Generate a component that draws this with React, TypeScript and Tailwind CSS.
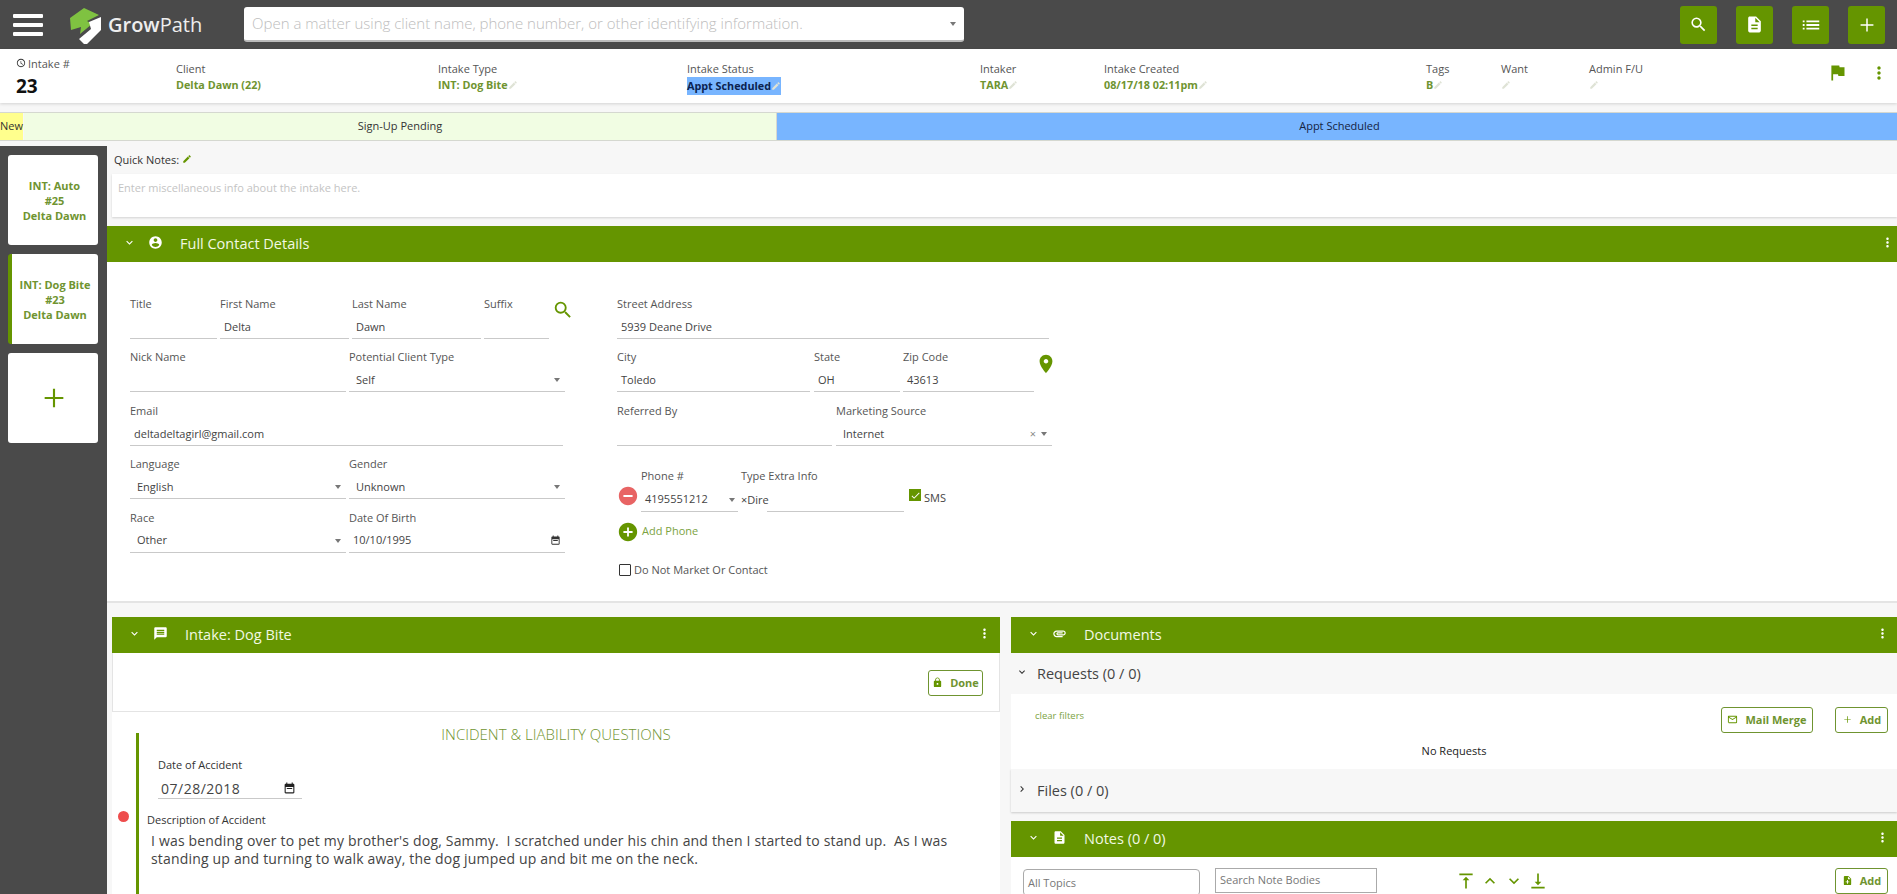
import React from "react";

const P = {
  search: "M15.5 14h-.79l-.28-.27A6.471 6.471 0 0 0 16 9.5 6.5 6.5 0 1 0 9.5 16c1.61 0 3.09-.59 4.23-1.57l.27.28v.79l5 4.99L20.49 19l-4.99-5zm-6 0C7.01 14 5 11.99 5 9.5S7.01 5 9.5 5 14 7.01 14 9.5 11.99 14 9.5 14z",
  doc: "M14 2H6c-1.1 0-1.99.9-1.99 2L4 20c0 1.1.89 2 1.99 2H18c1.1 0 2-.9 2-2V8l-6-6zm2 16H8v-2h8v2zm0-4H8v-2h8v2zm-3-5V3.5L18.5 9H13z",
  list: "M3 13h2v-2H3v2zm0 4h2v-2H3v2zm0-8h2V7H3v2zm4 4h14v-2H7v2zm0 4h14v-2H7v2zM7 7v2h14V7H7z",
  add: "M19 12.8h-6.2V19h-1.6v-6.2H5v-1.6h6.2V5h1.6v6.2H19v1.6z",
  flag: "M14.4 6L14 4H5v17h2v-7h5.6l.4 2h7V6z",
  more: "M12 8c1.1 0 2-.9 2-2s-.9-2-2-2-2 .9-2 2 .9 2 2 2zm0 2c-1.1 0-2 .9-2 2s.9 2 2 2 2-.9 2-2-.9-2-2-2zm0 6c-1.1 0-2 .9-2 2s.9 2 2 2 2-.9 2-2-.9-2-2-2z",
  edit: "M3 17.25V21h3.75L17.81 9.94l-3.75-3.75L3 17.25zM20.71 7.04c.39-.39.39-1.02 0-1.41l-2.34-2.34c-.39-.39-1.02-.39-1.41 0l-1.83 1.83 3.75 3.75 1.83-1.83z",
  down: "M16.59 8.59L12 13.17 7.41 8.59 6 10l6 6 6-6z",
  up: "M12 8l-6 6 1.41 1.41L12 10.83l4.59 4.58L18 14z",
  right: "M10 6L8.59 7.41 13.17 12l-4.58 4.59L10 18l6-6z",
  person: "M12 2C6.48 2 2 6.48 2 12s4.48 10 10 10 10-4.48 10-10S17.52 2 12 2zm0 3c1.66 0 3 1.34 3 3s-1.34 3-3 3-3-1.34-3-3 1.34-3 3-3zm0 14.2c-2.5 0-4.71-1.28-6-3.22.03-1.99 4-3.08 6-3.08 1.99 0 5.97 1.09 6 3.08-1.29 1.94-3.5 3.22-6 3.22z",
  chat: "M20 2H4c-1.1 0-1.99.9-1.99 2L2 22l4-4h14c1.1 0 2-.9 2-2V4c0-1.1-.9-2-2-2zm-2 12H6v-2h12v2zm0-3H6V9h12v2zm0-3H6V6h12v2z",
  clip: "M2 12.5C2 9.46 4.46 7 7.5 7H18c2.21 0 4 1.79 4 4s-1.79 4-4 4H9.5C8.12 15 7 13.88 7 12.5S8.12 10 9.5 10H17v2H9.41c-.55 0-.55 1 0 1H18c1.1 0 2-.9 2-2s-.9-2-2-2H7.5C5.57 9 4 10.57 4 12.5S5.57 16 7.5 16H17v2H7.5C4.46 18 2 15.54 2 12.5z",
  lock: "M18 8h-1V6c0-2.76-2.24-5-5-5S7 3.24 7 6v2H6c-1.1 0-2 .9-2 2v10c0 1.1.9 2 2 2h12c1.1 0 2-.9 2-2V10c0-1.1-.9-2-2-2zm-6 9c-1.1 0-2-.9-2-2s.9-2 2-2 2 .9 2 2-.9 2-2 2zm3.1-9H8.9V6c0-1.71 1.39-3.1 3.1-3.1 1.71 0 3.1 1.39 3.1 3.1v2z",
  mail: "M20 4H4c-1.1 0-1.99.9-1.99 2L2 18c0 1.1.9 2 2 2h16c1.1 0 2-.9 2-2V6c0-1.1-.9-2-2-2zm0 14H4V8l8 5 8-5v10zm-8-7L4 6h16l-8 5z",
  noteAdd: "M14 2H6c-1.1 0-1.99.9-1.99 2L4 20c0 1.1.89 2 1.99 2H18c1.1 0 2-.9 2-2V8l-6-6zm2 14h-3v3h-2v-3H8v-2h3v-3h2v3h3v2zm-3-7V3.5L18.5 9H13z",
  pin: "M12 2C8.13 2 5 5.13 5 9c0 5.25 7 13 7 13s7-7.75 7-13c0-3.87-3.13-7-7-7zm0 9.5c-1.38 0-2.5-1.12-2.5-2.5s1.12-2.5 2.5-2.5 2.5 1.12 2.5 2.5-1.12 2.5-2.5 2.5z",
  minusCircle: "M12 2C6.48 2 2 6.48 2 12s4.48 10 10 10 10-4.48 10-10S17.52 2 12 2zm5 11H7v-2h10v2z",
  addCircle: "M12 2C6.48 2 2 6.48 2 12s4.48 10 10 10 10-4.48 10-10S17.52 2 12 2zm5 11h-4v4h-2v-4H7v-2h4V7h2v4h4v2z",
  calendar: "M19 3h-1V1h-2v2H8V1H6v2H5c-1.11 0-1.99.9-1.99 2L3 19c0 1.1.89 2 2 2h14c1.1 0 2-.9 2-2V5c0-1.1-.9-2-2-2zm0 16H5V9h14v10zM7 11h10v2H7z",
  top: "M8 11h3v10h2V11h3l-4-4-4 4zM4 3v2h16V3H4z",
  bottom: "M16 13h-3V3h-2v10H8l4 4 4-4zM4 19v2h16v-2H4z",
  clock: "M11.99 2C6.47 2 2 6.48 2 12s4.47 10 9.99 10C17.52 22 22 17.52 22 12S17.52 2 11.99 2zM12 20c-4.42 0-8-3.58-8-8s3.58-8 8-8 8 3.58 8 8-3.58 8-8 8zm.5-13H11v6l5.25 3.15.75-1.23-4.5-2.67z",
  check: "M9 16.17L4.83 12l-1.42 1.41L9 19 21 7l-1.41-1.41z",
};

const Icon = ({ d, className }: { d: string; className?: string }) => (
  <svg viewBox="0 0 24 24" fill="currentColor" className={`shrink-0 ${className ?? ""}`}>
    <path d={d} />
  </svg>
);

const Pencil = () => <Icon d={P.edit} className="w-[10px] h-[10px] text-[#dfe3d6]" />;

const Caret = ({ className }: { className?: string }) => (
  <span className={`w-0 h-0 border-x-[3.5px] border-x-transparent border-t-[4px] border-t-[#777] ${className ?? ""}`} />
);

const TopButton = ({ d, size = "w-[19px] h-[19px]" }: { d: string; size?: string }) => (
  <button className="w-[37px] h-[38px] rounded-[3px] bg-[#659500] flex items-center justify-center text-white">
    <Icon d={d} className={size} />
  </button>
);

const Info = ({
  label,
  value,
  dark,
  edit = true,
}: {
  label: string;
  value?: string;
  dark?: boolean;
  edit?: boolean;
}) => (
  <div className="pt-[12px] min-w-0">
    <p className="text-[11px] leading-[16px] text-[#555]">{label}</p>
    <div
      className={`flex items-center w-fit text-[10.8px] font-bold whitespace-nowrap ${
        dark ? "bg-[#78b5ff] text-[#0b2350] h-[18px]" : "text-[#6f9430] h-[16px]"
      }`}
    >
      {value}
      {edit && <Pencil />}
    </div>
  </div>
);

const Field = ({
  label,
  value,
  className,
  select,
  clear,
  date,
  pad = "pl-[4px]",
}: {
  label: string;
  value?: string;
  className?: string;
  select?: boolean;
  clear?: boolean;
  date?: boolean;
  pad?: string;
}) => (
  <div className={`shrink-0 ${className ?? ""}`}>
    <p className="text-[11px] leading-[15px] text-[#555] whitespace-nowrap">{label}</p>
    <div className={`mt-[8px] h-[20px] pb-[3px] border-b border-[#c9c9c9] flex items-center text-[11px] text-[#444] ${pad}`}>
      <span className="flex-1 whitespace-nowrap">{value}</span>
      {clear && <span className="text-[11px] leading-none text-[#888] mr-[5px]">×</span>}
      {select && <Caret className="mr-[5px]" />}
      {date && <Icon d={P.calendar} className="w-[11px] h-[11px] mr-[4px] text-[#333]" />}
    </div>
  </div>
);

const SectionHeader = ({
  icon,
  title,
  moreClass = "mr-[2px]",
}: {
  icon: string;
  title: string;
  moreClass?: string;
}) => (
  <div className="h-[36px] bg-[#659500] flex items-center text-white shrink-0">
    <Icon d={P.down} className="w-[13px] h-[13px] ml-[16px] mb-[3px]" />
    <Icon d={icon} className="w-[15px] h-[15px] ml-[12px] mb-[3px]" />
    <span className="ml-[17px] text-[14.5px] leading-none text-[#f2f9e4]">{title}</span>
    <Icon d={P.more} className={`w-[15px] h-[15px] ml-auto mb-[3px] ${moreClass}`} />
  </div>
);

const OutlineButton = ({ d, label, className }: { d: string; label: string; className?: string }) => (
  <button
    className={`h-[26px] rounded-[3px] border border-[#6f9430] bg-white flex items-center justify-center gap-[7px] text-[11px] font-bold text-[#6f9430] ${className ?? ""}`}
  >
    <Icon d={d} className="w-[11px] h-[11px] text-[#659500] mb-[2px]" />
    {label}
  </button>
);

const Card = ({ lines, active }: { lines: string[]; active?: boolean }) => (
  <div
    className={`w-[90px] h-[90px] bg-white rounded-[3px] flex flex-col items-center justify-center text-[11px] leading-[15px] font-bold text-[#6f9430] ${
      active ? "border-l-[4px] border-[#659500]" : "pl-[3px]"
    }`}
  >
    {lines.map((l) => (
      <span key={l} className="whitespace-nowrap">
        {l}
      </span>
    ))}
  </div>
);

const Logo = () => (
  <svg viewBox="0 0 33 38" className="w-[33px] h-[38px] shrink-0">
    <path d="M0 12 L14 2 L29 9 L17 15 L22 18 L10 28 L11 21 L1 24 Z" fill="#7fc241" />
    <path d="M31 11 L31 24 L17 38 L14 38 L9 33 L21 23 L19 16 Z" fill="#fff" />
  </svg>
);

export default function App() {
  return (
    <div
      className="w-[1897px] h-[894px] overflow-hidden bg-[#f7f7f7] text-[#444]"
      style={{ fontFamily: '"Open Sans", sans-serif' }}
    >
      {/* top bar */}
      <div className="h-[49px] bg-[#4a4a4a] flex items-center">
        <div className="ml-[13px] w-[30px] flex flex-col gap-[5px]">
          <span className="h-[4px] rounded-[1px] bg-white" />
          <span className="h-[4px] rounded-[1px] bg-white" />
          <span className="h-[4px] rounded-[1px] bg-white" />
        </div>
        <div className="ml-[27px]">
          <Logo />
        </div>
        <span className="ml-[5px] w-[93px] text-[20px] font-semibold text-[#eee]">
          Grow<span className="font-normal">Path</span>
        </span>
        <div className="ml-[43px] w-[720px] h-[35px] bg-white rounded-[3px] border-b-2 border-[#bbb] flex items-center pl-[8px] pr-[8px]">
          <span className="flex-1 text-[15px] font-light text-[#bdbdbd] whitespace-nowrap">
            Open a matter using client name, phone number, or other identifying information.
          </span>
          <Caret />
        </div>
        <div className="ml-auto mr-[12px] flex gap-[19px]">
          <TopButton d={P.search} />
          <TopButton d={P.doc} />
          <TopButton d={P.list} size="w-[22px] h-[22px]" />
          <TopButton d={P.add} size="w-[22px] h-[22px]" />
        </div>
      </div>

      {/* intake summary */}
      <div className="h-[54px] bg-white shadow-[0_1px_3px_rgba(0,0,0,0.15)] pl-[16px] grid grid-cols-[160px_262px_249px_293px_124px_322px_75px_88px_240px_50px_1fr]">
        <div className="pt-[7px]">
          <p className="flex items-center gap-[2px] text-[11px] leading-[16px] text-[#555]">
            <Icon d={P.clock} className="w-[10px] h-[10px] mb-[3px] text-[#333]" />
            Intake #
          </p>
          <p className="mt-[2px] text-[19px] leading-[24px] font-bold text-[#111]">23</p>
        </div>
        <Info label="Client" value="Delta Dawn (22)" edit={false} />
        <Info label="Intake Type" value="INT: Dog Bite" />
        <Info label="Intake Status" value="Appt Scheduled" dark />
        <Info label="Intaker" value="TARA" />
        <Info label="Intake Created" value="08/17/18 02:11pm" />
        <Info label="Tags" value="B" />
        <Info label="Want" />
        <Info label="Admin F/U" />
        <Icon d={P.flag} className="w-[21px] h-[21px] mt-[13px] -ml-[2px] text-[#659500]" />
        <Icon d={P.more} className="w-[20px] h-[20px] mt-[14px] -ml-[10px] text-[#659500]" />
      </div>

      {/* status steps */}
      <div className="mt-[9px] h-[29px] flex text-[11px] text-[#333] border-y border-[#d5d8d0]">
        <div className="w-[23px] bg-[#ffff8d] flex items-center justify-center">New</div>
        <div className="w-[753px] ml-px bg-[#f1fde3] border-r border-[#d8d8d0] flex items-center justify-center">
          Sign-Up Pending
        </div>
        <div className="flex-1 pl-[5px] bg-[#78b5ff] flex items-center justify-center text-[#14233f]">Appt Scheduled</div>
      </div>

      <div className="mt-[5px] h-[748px] flex">
        {/* intake tabs */}
        <div className="w-[107px] shrink-0 bg-[#4a4a4a] pt-[9px] pl-[8px] flex flex-col gap-[9px]">
          <Card lines={["INT: Auto", "#25", "Delta Dawn"]} />
          <Card lines={["INT: Dog Bite", "#23", "Delta Dawn"]} active />
          <div className="w-[90px] h-[90px] pl-[2px] bg-white rounded-[3px] flex items-center justify-center">
            <Icon d={P.add} className="w-[32px] h-[32px] text-[#659500]" />
          </div>
        </div>

        <div className="flex-1 min-w-0">
          {/* quick notes */}
          <div className="h-[28px] pl-[7px] flex items-center gap-[3px] text-[11px] text-[#333]">
            Quick Notes:
            <Icon d={P.edit} className="w-[10px] h-[10px] mb-[2px] text-[#659500]" />
          </div>
          <div className="ml-[5px] h-[43px] bg-white shadow-[0_1px_2px_rgba(0,0,0,0.15)] pl-[6px] pt-[7px] text-[11px] leading-[14px] text-[#c4c4c4]">
            Enter miscellaneous info about the intake here.
          </div>

          {/* full contact details */}
          <div className="mt-[9px]">
            <SectionHeader icon={P.person} title="Full Contact Details" />
            <div className="h-[341px] bg-white border-b-2 border-[#e4e4e4] pt-[34px] pl-[23px] flex">
              <div className="w-[435px] shrink-0 flex flex-col gap-[10.4px]">
                <div className="flex">
                  <Field label="Title" className="w-[87px]" />
                  <Field label="First Name" value="Delta" className="w-[129px] ml-[3px]" />
                  <Field label="Last Name" value="Dawn" className="w-[129px] ml-[3px]" />
                  <Field label="Suffix" className="w-[65px] ml-[3px]" />
                  <Icon d={P.search} className="w-[22px] h-[22px] ml-[3px] mt-[3px] text-[#659500]" />
                </div>
                <div className="flex">
                  <Field label="Nick Name" className="w-[216px]" />
                  <Field label="Potential Client Type" value="Self" select className="w-[216px] ml-[3px]" pad="pl-[7px]" />
                </div>
                <Field label="Email" value="deltadeltagirl@gmail.com" className="w-[433px]" />
                <div className="flex">
                  <Field label="Language" value="English" select className="w-[216px]" pad="pl-[7px]" />
                  <Field label="Gender" value="Unknown" select className="w-[216px] ml-[3px]" pad="pl-[7px]" />
                </div>
                <div className="flex">
                  <Field label="Race" value="Other" select className="w-[216px]" pad="pl-[7px]" />
                  <Field label="Date Of Birth" value="10/10/1995" date className="w-[216px] ml-[3px]" />
                </div>
              </div>

              <div className="ml-[52px] w-[440px] flex flex-col gap-[10.4px]">
                <Field label="Street Address" value="5939 Deane Drive" className="w-[432px]" />
                <div className="flex">
                  <Field label="City" value="Toledo" className="w-[193px]" />
                  <Field label="State" value="OH" className="w-[86px] ml-[4px]" />
                  <Field label="Zip Code" value="43613" className="w-[131px] ml-[3px]" />
                  <Icon d={P.pin} className="w-[22px] h-[22px] ml-[1px] mt-[4px] text-[#659500]" />
                </div>
                <div className="flex">
                  <Field label="Referred By" className="w-[215px]" />
                  <Field label="Marketing Source" value="Internet" select clear className="w-[216px] ml-[4px]" pad="pl-[7px]" />
                </div>
                <div className="mt-[12px] flex">
                  <Icon d={P.minusCircle} className="w-[22px] h-[22px] ml-0 mt-[17px] text-[#e86464]" />
                  <div className="w-[97px] ml-[2px]">
                    <p className="text-[11px] leading-[15px] text-[#555]">Phone #</p>
                    <div className="mt-[7px] h-[22px] pb-[2px] border-b border-[#c9c9c9] pl-[4px] flex items-center text-[11px]">
                      <span className="flex-1">4195551212</span>
                      <Caret className="mr-[3px]" />
                    </div>
                  </div>
                  <div className="ml-[3px]">
                    <p className="text-[11px] leading-[15px] text-[#555] whitespace-nowrap">Type Extra Info</p>
                    <div className="mt-[7px] h-[22px] flex items-center text-[11px]">
                      <span className="w-[26px] pb-[2px] whitespace-nowrap">×Dire</span>
                      <span className="w-[137px] h-[22px] border-b border-[#c9c9c9]" />
                    </div>
                  </div>
                  <div className="ml-[5px] mt-[21px] h-[14px] flex items-start gap-[3px] text-[11px]">
                    <span className="w-[12px] h-[12px] bg-[#659500] flex items-center justify-center">
                      <Icon d={P.check} className="w-[11px] h-[11px] text-white" />
                    </span>
                    <span className="mt-[1px] leading-[15px]">SMS</span>
                  </div>
                </div>
                <div className="-mt-[2px] flex items-center gap-[3px] text-[11px] text-[#7ca33f]">
                  <Icon d={P.addCircle} className="w-[22px] h-[22px] text-[#659500]" />
                  Add Phone
                </div>
                <div className="mt-[9px] ml-[2px] flex items-center gap-[3px] text-[11px] text-[#555]">
                  <span className="w-[12px] h-[12px] mb-[1px] border border-[#333] rounded-[1px]" />
                  Do Not Market Or Contact
                </div>
              </div>
            </div>
          </div>

          <div className="mt-[14px] ml-[5px] flex">
            {/* intake questions */}
            <div className="w-[888px] shrink-0">
              <SectionHeader icon={P.chat} title="Intake: Dog Bite" moreClass="mr-[8px]" />
              <div className="h-[59px] bg-white border-x border-b border-[#e4e4e4] flex items-center justify-end pr-[16px]">
                <OutlineButton d={P.lock} label="Done" className="w-[55px] mt-[2px]" />
              </div>
              <div className="h-[182px] bg-white overflow-hidden relative">
                <p className="mt-[12px] h-[20px] text-center text-[15px] leading-[20px] font-light text-[#6f9430]">
                  INCIDENT &amp; LIABILITY QUESTIONS
                </p>
                <span className="absolute left-[6px] top-[99px] w-[11px] h-[11px] rounded-full bg-[#ee4d4d]" />
                <div className="relative -mt-[11px] ml-[24px] h-[170px] border-l-[3px] border-[#659500] pt-[24px]">
                  <div className="ml-[19px] w-[144px]">
                    <p className="text-[11px] leading-[15px] text-[#333]">Date of Accident</p>
                    <div className="mt-[6px] h-[21px] border-b border-[#c9c9c9] pl-[3px] flex items-center justify-between text-[14px] tracking-[0.5px] text-[#444]">
                      07/28/2018
                      <Icon d={P.calendar} className="w-[13px] h-[13px] mr-[6px] text-[#222]" />
                    </div>
                  </div>
                  <p className="mt-[13px] ml-[8px] text-[11px] leading-[15px] text-[#333]">Description of Accident</p>
                  <p className="mt-[5px] ml-[12px] w-[815px] text-[14px] leading-[18px] tracking-[0.18px] whitespace-pre-wrap text-[#444]">
                    {"I was bending over to pet my brother's dog, Sammy.  I scratched under his chin and then I started to stand up.  As I was\nstanding up and turning to walk away, the dog jumped up and bit me on the neck."}
                  </p>
                </div>
              </div>
            </div>

            {/* documents + notes */}
            <div className="ml-[11px] flex-1 min-w-0">
              <SectionHeader icon={P.clip} title="Documents" moreClass="mr-[7px]" />
              <div className="h-[41px] bg-[#f7f7f7] flex items-center text-[14.5px] text-[#444]">
                <Icon d={P.down} className="w-[12px] h-[12px] ml-[5px] mb-[4px] text-[#333]" />
                <span className="ml-[9px] mt-px">Requests (0 / 0)</span>
              </div>
              <div className="h-[75px] bg-white relative">
                <div className="flex items-start">
                  <span className="ml-[24px] mt-[15px] text-[9.5px] leading-[14px] text-[#7ca33f]">clear filters</span>
                  <OutlineButton d={P.mail} label="Mail Merge" className="ml-auto mt-[13px] w-[92px]" />
                  <OutlineButton d={P.add} label="Add" className="ml-[22px] mr-[9px] mt-[13px] w-[53px]" />
                </div>
                <p className="mt-[10px] text-center text-[11px] leading-[15px] text-[#222]">No Requests</p>
              </div>
              <div className="h-[43px] bg-[#f7f7f7] shadow-[0_1px_2px_rgba(0,0,0,0.18)] flex items-center text-[14.5px] text-[#444]">
                <Icon d={P.right} className="w-[12px] h-[12px] ml-[5px] mb-[4px] text-[#333]" />
                <span className="ml-[9px]">Files (0 / 0)</span>
              </div>

              <div className="mt-[9px]">
                <SectionHeader icon={P.doc} title="Notes (0 / 0)" moreClass="mr-[7px]" />
                <div className="h-[40px] bg-white flex items-start pl-[12px] overflow-hidden">
                  <div className="mt-[12px] w-[177px] h-[27px] border border-[#aaa] rounded-[4px] pl-[4px] text-[11px] leading-[25px] text-[#777]">
                    All Topics
                  </div>
                  <div className="mt-[11px] ml-[15px] w-[162px] h-[25px] border border-[#aaa] pl-[4px] text-[11px] leading-[21px] text-[#777]">
                    Search Note Bodies
                  </div>
                  <div className="mt-[14px] ml-[79px] flex gap-[4px] text-[#659500]">
                    <Icon d={P.top} className="w-[20px] h-[20px]" />
                    <Icon d={P.up} className="w-[20px] h-[20px]" />
                    <Icon d={P.down} className="w-[20px] h-[20px]" />
                    <Icon d={P.bottom} className="w-[20px] h-[20px]" />
                  </div>
                  <OutlineButton d={P.noteAdd} label="Add" className="ml-auto mr-[9px] mt-[11px] w-[53px]" />
                </div>
              </div>
            </div>
          </div>
        </div>
      </div>
    </div>
  );
}
